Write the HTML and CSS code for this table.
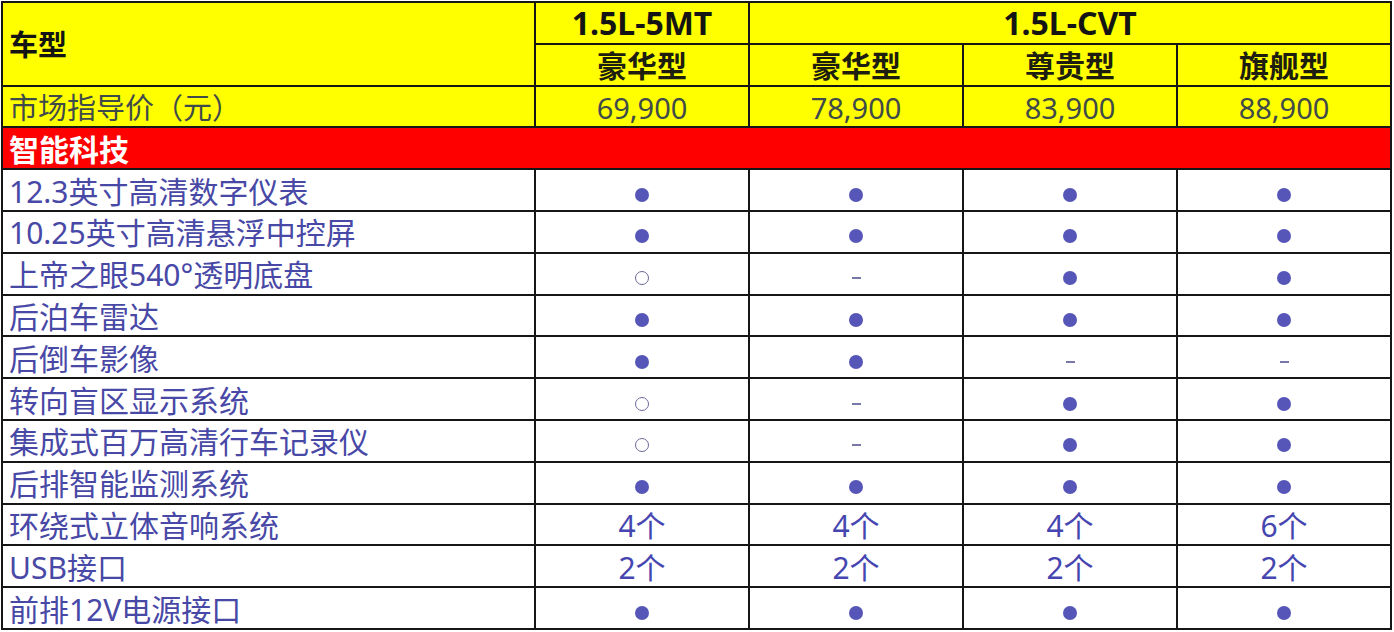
FILE: index.html
```html
<!DOCTYPE html>
<html lang="zh-CN">
<head>
<meta charset="utf-8">
<title>配置表</title>
<link rel="stylesheet" href="styles.css">
</head>
<body>
<table class="spec">
  <colgroup>
    <col class="c-name"><col class="c-v"><col class="c-v"><col class="c-v"><col class="c-v">
  </colgroup>
  <tr class="hdr">
    <td class="name model" rowspan="2">车型</td>
    <td class="eng">1.5L-5MT</td>
    <td class="eng" colspan="3">1.5L-CVT</td>
  </tr>
  <tr class="hdr">
    <td class="trim">豪华型</td>
    <td class="trim">豪华型</td>
    <td class="trim">尊贵型</td>
    <td class="trim">旗舰型</td>
  </tr>
  <tr class="hdr price">
    <td class="name">市场指导价（元）</td>
    <td>69,900</td>
    <td>78,900</td>
    <td>83,900</td>
    <td>88,900</td>
  </tr>
  <tr class="section">
    <td colspan="5">智能科技</td>
  </tr>
  <tr class="feat">
    <td class="name">12.3英寸高清数字仪表</td>
    <td><span class="dot"></span></td><td><span class="dot"></span></td><td><span class="dot"></span></td><td><span class="dot"></span></td>
  </tr>
  <tr class="feat">
    <td class="name">10.25英寸高清悬浮中控屏</td>
    <td><span class="dot"></span></td><td><span class="dot"></span></td><td><span class="dot"></span></td><td><span class="dot"></span></td>
  </tr>
  <tr class="feat">
    <td class="name">上帝之眼540°透明底盘</td>
    <td><span class="ring"></span></td><td><span class="dash"></span></td><td><span class="dot"></span></td><td><span class="dot"></span></td>
  </tr>
  <tr class="feat">
    <td class="name">后泊车雷达</td>
    <td><span class="dot"></span></td><td><span class="dot"></span></td><td><span class="dot"></span></td><td><span class="dot"></span></td>
  </tr>
  <tr class="feat">
    <td class="name">后倒车影像</td>
    <td><span class="dot"></span></td><td><span class="dot"></span></td><td><span class="dash"></span></td><td><span class="dash"></span></td>
  </tr>
  <tr class="feat">
    <td class="name">转向盲区显示系统</td>
    <td><span class="ring"></span></td><td><span class="dash"></span></td><td><span class="dot"></span></td><td><span class="dot"></span></td>
  </tr>
  <tr class="feat">
    <td class="name">集成式百万高清行车记录仪</td>
    <td><span class="ring"></span></td><td><span class="dash"></span></td><td><span class="dot"></span></td><td><span class="dot"></span></td>
  </tr>
  <tr class="feat">
    <td class="name">后排智能监测系统</td>
    <td><span class="dot"></span></td><td><span class="dot"></span></td><td><span class="dot"></span></td><td><span class="dot"></span></td>
  </tr>
  <tr class="feat">
    <td class="name">环绕式立体音响系统</td>
    <td class="txt">4个</td><td class="txt">4个</td><td class="txt">4个</td><td class="txt">6个</td>
  </tr>
  <tr class="feat">
    <td class="name">USB接口</td>
    <td class="txt">2个</td><td class="txt">2个</td><td class="txt">2个</td><td class="txt">2个</td>
  </tr>
  <tr class="feat">
    <td class="name">前排12V电源接口</td>
    <td><span class="dot"></span></td><td><span class="dot"></span></td><td><span class="dot"></span></td><td><span class="dot"></span></td>
  </tr>
</table>
</body>
</html>
```

FILE: styles.css
```css
html, body {
  margin: 0;
  padding: 0;
  background: #ffffff;
}

body {
  font-family: "Noto Sans", "Noto Sans CJK SC", sans-serif;
  padding: 1px 0 0 1px;
}

.spec {
  border-collapse: collapse;
  table-layout: fixed;
  width: 1389px;
}

.c-name { width: 533px; }
.c-v { width: 214px; }

.spec tr {
  height: 41.8px;
}

.spec td {
  border: 2px solid #161616;
  height: 36.8px;
  padding: 3px 0 0 0;
  line-height: 30px;
  text-align: center;
  vertical-align: middle;
  white-space: nowrap;
}

.spec td.name {
  text-align: left;
  padding-left: 6px;
}

.hdr td {
  background: #ffff00;
}

.eng {
  font-size: 32px;
  font-weight: 700;
  color: #141414;
  padding-top: 0 !important;
}

.trim {
  font-size: 30px;
  font-weight: 700;
  color: #1d1d10;
}

.model {
  font-size: 29px;
  font-weight: 700;
  color: #141414;
}

.price td {
  font-size: 29px;
  color: #3f4a4a;
}

.section td {
  background: #ff0000;
  color: #ffffff;
  font-size: 30px;
  font-weight: 700;
  text-align: left;
  padding-left: 6px;
}

.feat td {
  background: #ffffff;
  font-size: 30px;
  color: #4848a6;
}

.feat td.txt {
  color: #4646b0;
}

.dot {
  display: inline-block;
  width: 14px;
  height: 14px;
  border-radius: 50%;
  background: #5656b8;
  vertical-align: middle;
}

.ring {
  display: inline-block;
  width: 12px;
  height: 12px;
  border-radius: 50%;
  border: 1.6px solid #6a6a98;
  vertical-align: middle;
}

.dash {
  display: inline-block;
  width: 9px;
  height: 2px;
  background: #7878a8;
  vertical-align: middle;
}
```
